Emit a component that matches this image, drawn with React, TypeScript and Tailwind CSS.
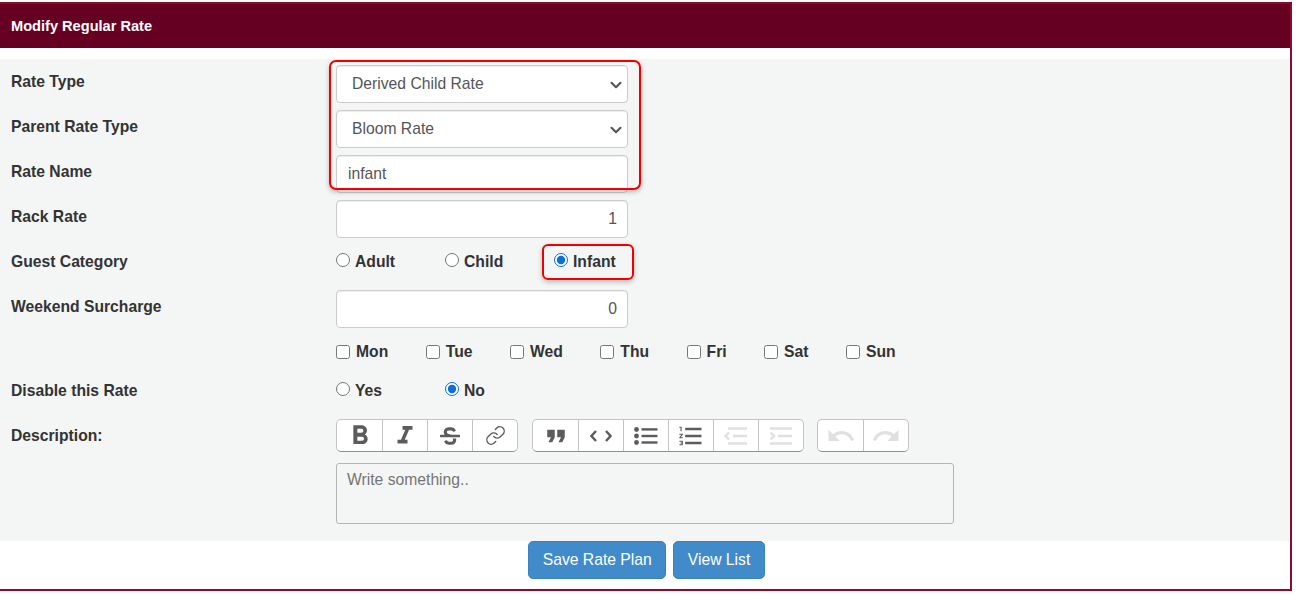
import { ChevronDown, Link } from "lucide-react";
import { MdFormatBold, MdFormatItalic, MdFormatQuote, MdFormatListNumbered, MdUndo, MdRedo } from "react-icons/md";
import { FaStrikethrough } from "react-icons/fa";
import type { ReactNode } from "react";

const days = ["Mon", "Tue", "Wed", "Thu", "Fri", "Sat", "Sun"];

function Row({ label, h, children }: { label?: string; h: string; children: ReactNode }) {
  return (
    <div className={`flex ${h}`}>
      <div className="w-[325px] shrink-0 text-[15.7px] leading-[34px] font-bold text-[#333]">{label}</div>
      <div className="flex-1">{children}</div>
    </div>
  );
}

const field = "block w-[292px] h-[38px] rounded border border-[#ccc] bg-white text-[15.7px] text-[#555] pl-[11px] pr-[10px] shadow-[inset_0_1px_1px_rgba(0,0,0,0.075)]";

function Select({ value }: { value: string }) {
  return (
    <div className="relative w-[292px]">
      <select defaultValue={value} className={`${field} appearance-none pl-[15px]`}>
        <option>{value}</option>
      </select>
      <ChevronDown size={18} strokeWidth={2.8} className="pointer-events-none absolute right-[3px] top-[11px] text-[#555]" />
    </div>
  );
}

function Radio({ label, name, checked }: { label: string; name: string; checked?: boolean }) {
  return (
    <label className="flex w-[109px] items-center text-[15.7px] leading-8 font-bold text-[#333]">
      <input type="radio" name={name} defaultChecked={checked} className="mr-[5px] size-[14px] -mt-[3px] accent-[#0a70d6]" />
      <span className="mt-[1px]">{label}</span>
    </label>
  );
}

function Group({ items }: { items: { icon: ReactNode; off?: boolean }[] }) {
  return (
    <div className="flex h-[33px] rounded-[5px] border border-[#c4c4c4] border-b-[#8f8f8f] bg-white overflow-hidden">
      {items.map((it, i) => (
        <div
          key={i}
          className={`flex w-[45px] items-center justify-center ${i > 0 ? "border-l border-[#c4c4c4]" : ""} ${it.off ? "text-[#e0e0e0]" : "text-[#5c5c5c]"}`}
        >
          {it.icon}
        </div>
      ))}
    </div>
  );
}

// toolbar glyphs the icon packages don't match closely
function CodeIcon() {
  return (
    <svg width="22" height="12" viewBox="0 0 22 12" fill="none" stroke="currentColor" strokeWidth="2.4">
      <path d="M6 1L1.5 6L6 11" />
      <path d="M16 1L20.5 6L16 11" />
    </svg>
  );
}

function BulletsIcon() {
  return (
    <svg width="24" height="18" viewBox="0 0 24 18" fill="currentColor">
      <circle cx="2.5" cy="2.5" r="2.4" />
      <circle cx="2.5" cy="9" r="2.4" />
      <circle cx="2.5" cy="15.5" r="2.4" />
      <rect x="7.5" y="1.2" width="16" height="2.4" />
      <rect x="7.5" y="7.8" width="16" height="2.4" />
      <rect x="7.5" y="14.3" width="16" height="2.4" />
    </svg>
  );
}

function IndentIcon({ out }: { out?: boolean }) {
  return (
    <svg width="24" height="18" viewBox="0 0 24 18" fill="none" stroke="currentColor" strokeWidth="2.4">
      <path d={out ? "M4 1.5H23" : "M1 1.5H23"} />
      <path d="M9 9H23" />
      <path d={out ? "M4 16.5H23" : "M1 16.5H23"} />
      <path d={out ? "M5 5.5L1.5 9L5 12.5" : "M1.5 5.5L5 9L1.5 12.5"} />
    </svg>
  );
}

export default function App() {
  return (
    <div className="w-[1292px] h-[589px] mt-[2px] border-2 border-l-0 border-[#8c0a2e] bg-white font-['Liberation_Sans',Arial,sans-serif]">
      <div className="h-[44px] bg-[#660022] pl-[11px] text-[14.6px] leading-[44px] font-bold text-white">Modify Regular Rate</div>
      <div className="relative mt-[11px] h-[482px] bg-[#f4f6f5] pt-[6px] pl-[11px]">
        <Row label="Rate Type" h="h-[45px]">
          <Select value="Derived Child Rate" />
        </Row>
        <Row label="Parent Rate Type" h="h-[45px]">
          <Select value="Bloom Rate" />
        </Row>
        <Row label="Rate Name" h="h-[45px]">
          <input defaultValue="infant" className={field} />
        </Row>
        <Row label="Rack Rate" h="h-[45px]">
          <input defaultValue="1" className={`${field} text-right`} />
        </Row>
        <Row label="Guest Category" h="h-[45px]">
          <div className="flex">
            <Radio name="cat" label="Adult" />
            <Radio name="cat" label="Child" />
            <Radio name="cat" label="Infant" checked />
          </div>
        </Row>
        <Row label="Weekend Surcharge" h="h-[45px]">
          <input defaultValue="0" className={`${field} text-right`} />
        </Row>
        <Row h="h-[39px]">
          <div className="flex gap-[37.5px]">
            {days.map((d) => (
              <label key={d} className="flex items-center text-[15.7px] leading-8 font-bold text-[#333]">
                <input type="checkbox" className="mr-[6px] size-[14px] mt-[1px]" />
                <span className="mt-[1px]">{d}</span>
              </label>
            ))}
          </div>
        </Row>
        <Row label="Disable this Rate" h="h-[45px]">
          <div className="flex">
            <Radio name="off" label="Yes" />
            <Radio name="off" label="No" checked />
          </div>
        </Row>
        <Row label="Description:" h="h-[105px]">
          <div className="flex gap-[14px]">
            <Group
              items={[
                { icon: <MdFormatBold size={32} /> },
                { icon: <MdFormatItalic size={30} /> },
                { icon: <FaStrikethrough size={20} /> },
                { icon: <Link size={21} strokeWidth={1.6} /> },
              ]}
            />
            <Group
              items={[
                { icon: <MdFormatQuote size={30} /> },
                { icon: <CodeIcon /> },
                { icon: <BulletsIcon /> },
                { icon: <MdFormatListNumbered size={28} /> },
                { icon: <IndentIcon out />, off: true },
                { icon: <IndentIcon />, off: true },
              ]}
            />
            <div className="-ml-px">
              <Group
                items={[
                  { icon: <MdUndo size={30} />, off: true },
                  { icon: <MdRedo size={30} />, off: true },
                ]}
              />
            </div>
          </div>
          <textarea
            placeholder="Write something.."
            className="mt-[11px] block h-[61px] w-[618px] resize-none rounded-[3px] border border-[#b5b5b5] bg-transparent px-[10px] py-[6px] text-[15.7px] leading-5 placeholder:text-[#757575]"
          />
        </Row>
        <div className="absolute left-[329px] top-[1px] h-[130px] w-[312px] rounded-[7px] border-2 border-[#f00000] shadow-[0_2px_5px_rgba(0,0,0,0.25)]" />
        <div className="absolute left-[542px] top-[185px] h-[36px] w-[92px] rounded-[6px] border-2 border-[#f00000] shadow-[0_2px_5px_rgba(0,0,0,0.25)]" />
      </div>
      <div className="flex justify-center gap-[7px] pl-[3px]">
        <button className="h-[38px] rounded-[5px] border border-[#3a80c0] bg-[#428bca] px-[13.5px] text-[15.7px] text-white">Save Rate Plan</button>
        <button className="h-[38px] rounded-[5px] border border-[#3a80c0] bg-[#428bca] px-[13.5px] text-[15.7px] text-white">View List</button>
      </div>
    </div>
  );
}
